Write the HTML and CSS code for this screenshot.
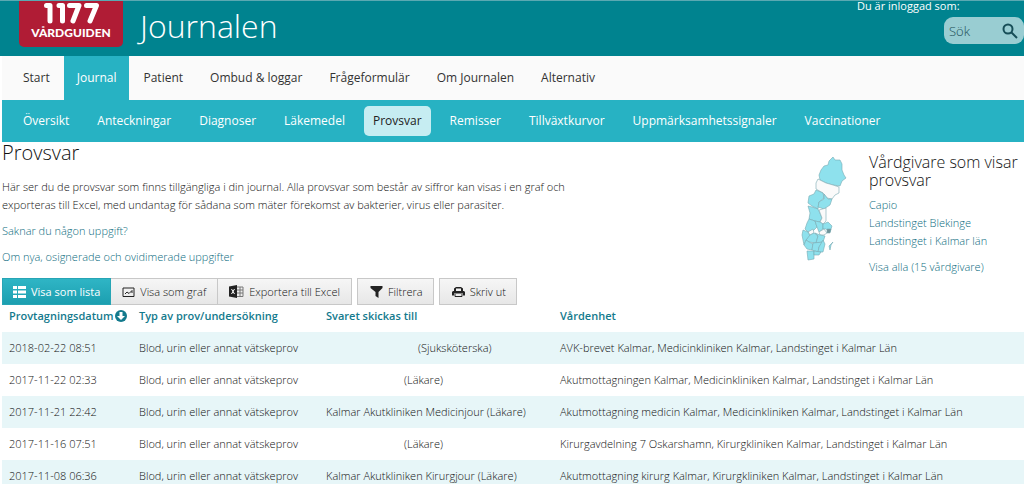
FILE: index.html
```html
<!DOCTYPE html>
<html lang="sv">
<head>
<meta charset="utf-8">
<title>Provsvar – Journalen</title>
<link rel="stylesheet" href="styles.css">
</head>
<body>
<header class="top">
  <a class="logo" href="#" aria-label="1177 Vårdguiden">
    <svg class="logo-mark" viewBox="0 0 58 22" aria-hidden="true">
      <path d="M3.500 3.500H7V19M16 3.500H19.500V19M26.500 3.500H36L30 19M43.500 3.500H53.500L47 19"/>
    </svg>
    <span class="logo-name">VÅRDGUIDEN</span>
  </a>
  <span class="brand">Journalen</span>
  <div class="account">
    <span class="login">Du är inloggad som:</span>
    <form class="search" role="search">
      <input class="search-field" type="text" placeholder="Sök" aria-label="Sök">
      <button class="search-button" type="button" aria-label="Sök">
        <svg viewBox="0 0 16 16"><circle cx="6" cy="6" r="4.500"/><path d="M9.500 9.500L15 15"/></svg>
      </button>
    </form>
  </div>
</header>
<nav class="main-nav" aria-label="Huvudmeny">
  <a href="#">Start</a>
  <a class="active" href="#">Journal</a>
  <a href="#">Patient</a>
  <a href="#">Ombud &amp; loggar</a>
  <a href="#">Frågeformulär</a>
  <a href="#">Om Journalen</a>
  <a href="#">Alternativ</a>
</nav>
<nav class="sub-nav" aria-label="Journal">
  <a href="#">Översikt</a>
  <a href="#">Anteckningar</a>
  <a href="#">Diagnoser</a>
  <a href="#">Läkemedel</a>
  <a class="current" href="#">Provsvar</a>
  <a href="#">Remisser</a>
  <a href="#">Tillväxtkurvor</a>
  <a href="#">Uppmärksamhetssignaler</a>
  <a href="#">Vaccinationer</a>
</nav>
<main class="page">
  <div class="intro">
    <section class="lead">
      <h1>Provsvar</h1>
      <p>Här ser du de provsvar som finns tillgängliga i din journal. Alla provsvar som består av siffror kan visas i en graf och exporteras till Excel, med undantag för sådana som mäter förekomst av bakterier, virus eller parasiter.</p>
      <p><a href="#">Saknar du någon uppgift?</a></p>
      <p><a href="#">Om nya, osignerade och ovidimerade uppgifter</a></p>
    </section>
    <aside class="providers">
      <svg class="map" viewBox="0 0 46 106" aria-hidden="true">
        <path class="land" d="M20 14L23 10L27 9L28 5L32 1L34 4L39 4L41 8L41 14L43 19L45 22L41 25L39 30L32 29L25 27L19 24L18 19Z"/>
        <path class="blank" d="M17 23L25 27L32 29L38 31L38 37L34 39L31 43L26 42L22 37L15 33L15 27Z"/>
        <path class="land" d="M15 34L22 37L23 42L18 46L17 53L11 50L7 47L8 40L13 38Z"/>
        <path class="land" d="M23 38L27 43L31 43L29 49L23 53L17 51L18 46L23 43Z"/>
        <path class="land" d="M7 50L11 51L17 53L21 62L19 66L14 65L8 63L9 57Z"/>
        <path class="blank" d="M18 54L25 52L25 65L22 68L19 66L21 62Z"/>
        <path class="land" d="M8 63L14 65L16 71L12 75L7 76L4 73L6 67Z"/>
        <path class="land" d="M14 65L19 66L22 68L22 73L18 76L16 71Z"/>
        <path class="land" d="M22 68L27 66L31 70L29 76L25 73L22 73Z"/>
        <path class="blank" d="M7 76L12 73L13 77L9 79ZM18 76L23 73L26 77L23 79L19 79Z"/>
        <path class="dark" d="M26 73L30 73L29 77L26 77Z"/>
        <path class="land" d="M2 74L7 76L9 80L5 84L3 89L1 79Z"/>
        <path class="land" d="M9 79L13 77L17 80L15 87L8 86L5 84Z"/>
        <path class="land" d="M14 77L19 79L24 80L22 86L15 87L17 80Z"/>
        <path class="land" d="M5 84L8 86L12 88L11 94L6 93L3 89Z"/>
        <path class="land" d="M12 87L22 86L18 91L17 96L11 94Z"/>
        <path class="land" d="M22 84L24 88L22 96L17 96L18 91Z"/>
        <path class="land" d="M6 95L13 95L13 103L7 104Z"/>
        <path class="land" d="M13 95L20 96L18 99L13 99Z"/>
        <path class="land" d="M32 86L30 89L29 94L28 90Z"/>
      </svg>
      <div class="provider-list">
        <h2>Vårdgivare som visar provsvar</h2>
        <ul>
          <li><a href="#">Capio</a></li>
          <li><a href="#">Landstinget Blekinge</a></li>
          <li><a href="#">Landstinget i Kalmar län</a></li>
        </ul>
        <a href="#">Visa alla (15 vårdgivare)</a>
      </div>
    </aside>
  </div>
  <div class="toolbar">
    <div class="group">
      <button class="tool selected" type="button"><svg viewBox="0 0 13 12"><path d="M0 0H4V3H0ZM5 0H13V3H5ZM0 4.500H4V7.500H0ZM5 4.500H13V7.500H5ZM0 9H4V12H0ZM5 9H13V12H5Z"/></svg>Visa som lista</button>
      <button class="tool" type="button"><svg viewBox="0 0 13 12"><path class="stroke" d="M1 2H12V10.500H1ZM3 8L5 6L7 7.500L10 4.500V7"/></svg>Visa som graf</button>
      <button class="tool" type="button"><svg class="wide" viewBox="0 0 15 13"><path d="M0 1.500L8 0V13L0 11.500Z"/><path class="thin" d="M8 2H14V11.500H8M8 5H14M8 8H14M11 2V11"/><path class="cross" d="M2.500 4L5.500 9M5.500 4L2.500 9"/></svg>Exportera till Excel</button>
    </div>
    <button class="tool filter" type="button"><svg viewBox="0 0 12 12"><path d="M0 0H12V2L8 6V12L5 10V6L0 2Z"/></svg>Filtrera</button>
    <button class="tool filter" type="button"><svg viewBox="0 0 13 12"><path fill-rule="evenodd" d="M4 1H9L11 2.500V5H12L13 6V9.500H11V7.500H2V9.500H0V6L1 5H2V2.500ZM4 2.500V5H9V2.500Z"/><path class="stroke" d="M3 8V10.500H10V8"/></svg>Skriv ut</button>
  </div>
  <table class="results">
    <thead>
      <tr><th class="col-date">Provtagningsdatum<svg class="sort" viewBox="0 0 12 12" aria-hidden="true"><circle cx="6" cy="6" r="6"/><path d="M4.500 2H7.500V6H10L6 10L2 6H4.500Z"/></svg></th><th class="col-type">Typ av prov/undersökning</th><th class="col-to">Svaret skickas till</th><th>Vårdenhet</th></tr>
    </thead>
    <tbody>
      <tr><td>2018-02-22 08:51</td><td>Blod, urin eller annat vätskeprov</td><td class="nurse">(Sjuksköterska)</td><td>AVK-brevet Kalmar, Medicinkliniken Kalmar, Landstinget i Kalmar Län</td></tr>
      <tr><td>2017-11-22 02:33</td><td>Blod, urin eller annat vätskeprov</td><td class="doctor">(Läkare)</td><td>Akutmottagningen Kalmar, Medicinkliniken Kalmar, Landstinget i Kalmar Län</td></tr>
      <tr><td>2017-11-21 22:42</td><td>Blod, urin eller annat vätskeprov</td><td>Kalmar Akutkliniken Medicinjour (Läkare)</td><td>Akutmottagning medicin Kalmar, Medicinkliniken Kalmar, Landstinget i Kalmar Län</td></tr>
      <tr><td>2017-11-16 07:51</td><td>Blod, urin eller annat vätskeprov</td><td class="doctor">(Läkare)</td><td>Kirurgavdelning 7 Oskarshamn, Kirurgkliniken Kalmar, Landstinget i Kalmar Län</td></tr>
      <tr><td>2017-11-08 06:36</td><td>Blod, urin eller annat vätskeprov</td><td>Kalmar Akutkliniken Kirurgjour (Läkare)</td><td>Akutmottagning kirurg Kalmar, Kirurgkliniken Kalmar, Landstinget i Kalmar Län</td></tr>
    </tbody>
  </table>
</main>
</body>
</html>
```
FILE: styles.css
```css
* { box-sizing: border-box; }
body { margin: 0; font: 300 11px/18px "Open Sans", "Noto Sans", sans-serif; color: #111; background: #fff; }
a { color: #0b6c80; text-decoration: none; }
button, input { font: inherit; }
.top { display: flex; height: 56px; padding-left: 19px; background: #00838f; border-top: 1px solid #5aa9b2; color: #fff; }
.logo { display: flex; flex-direction: column; align-items: center; width: 104px; height: 46px; background: #b01c35; border-radius: 0 0 5px 5px; color: #fff; }
.logo-mark { width: 58px; height: 22px; margin: 1px 0 0 2px; }
.logo-mark path { fill: none; stroke: #fff; stroke-width: 5; stroke-linecap: round; stroke-linejoin: round; }
.logo-name { margin-top: 1px; font: 900 12px/16px Lato, sans-serif; }
.brand { margin-left: 17px; font-size: 32px; line-height: 50px; }
.account { display: flex; flex-direction: column; margin-left: auto; width: 167px; }
.login { line-height: 12px; font-weight: 400; margin-top: -1px; }
.search { display: flex; align-items: center; width: 80px; height: 27px; margin: 5px 0 0 auto; padding: 0 6px 0 5px; border-radius: 9px; background: #99cdd2; }
.search-field { flex: 1; min-width: 0; padding: 0; border: 0; background: none; font-size: 13px; color: #1d4f57; }
.search-field::placeholder { color: #1d4f57; opacity: 1; }
.search-button { display: flex; padding: 0; border: 0; background: none; }
.search-button svg { width: 16px; height: 16px; fill: none; stroke: #174e58; stroke-width: 2; }
.main-nav, .sub-nav { display: flex; margin-left: 2px; font-size: 12px; font-weight: 400; }
.main-nav { gap: 1px; padding-left: 8px; background: #fafafa; line-height: 44px; }
.main-nav a { padding: 0 13px; color: #333; }
.main-nav .active { background: #27b2c3; color: #fff; }
.sub-nav { gap: 10px; align-items: center; height: 42px; padding-left: 12px; background: #27b2c3; }
.sub-nav a { padding: 0 9px; color: #fff; line-height: 30px; }
.sub-nav .current { background: #c6edf2; border-radius: 5px; color: #222; }
.page { padding-left: 2px; }
.intro { display: flex; justify-content: space-between; height: 136px; }
.lead { width: 570px; }
h1, h2 { margin: 0; font-weight: 300; color: #111; }
h1 { font-size: 20px; line-height: 22px; margin-bottom: 14px; }
p { margin: 0 0 8px; }
.providers { display: flex; width: 223px; gap: 22px; padding-top: 11px; }
.map { flex: none; width: 46px; height: 106px; margin-top: 3px; }
.map path { stroke: #79aab2; stroke-width: 0.6; stroke-linejoin: round; }
.land { fill: #8ee1ed; }
.blank { fill: #fafafa; }
.dark { fill: #6f9298; }
h2 { font-size: 16px; line-height: 18px; margin-bottom: 7px; }
ul { list-style: none; margin: 0 0 8px; padding: 0; }
.toolbar { display: flex; gap: 5px; }
.group { display: flex; }
.tool { display: flex; align-items: center; gap: 5px; height: 27px; padding: 0 11px; border: 1px solid #c8c8c8; background: linear-gradient(#f6f6f6, #e7e7e7); color: #111; }
.group .tool + .tool { border-left: 0; }
.tool.filter { padding: 0 10px 0 12px; }
.tool svg { width: 13px; height: 12px; fill: #222; }
.tool svg.wide { width: 15px; height: 13px; }
.tool .stroke { fill: none; stroke: #222; stroke-width: 1; }
.tool .thin { fill: none; stroke: #777; stroke-width: 1; }
.tool .cross { stroke: #fff; }
.tool.selected { background: linear-gradient(#2fb5c5, #1c9fb0); border-color: #27a5b5; color: #fff; font-weight: 400; padding: 0 10px; }
.tool.selected svg { fill: #fff; }
.results { width: 100%; border-collapse: collapse; table-layout: fixed; }
th { padding: 0 7px; height: 27px; text-align: left; vertical-align: top; font-weight: 600; line-height: 22px; color: #137a8d; white-space: nowrap; }
td { padding: 0 7px; height: 32px; white-space: nowrap; }
.col-date { width: 130px; }
.col-type { width: 187px; }
.col-to { width: 234px; }
tbody tr:nth-child(odd) { background: #e7f6f8; }
.nurse { padding-left: 99px; }
.doctor { padding-left: 85px; }
.sort { width: 12px; height: 12px; margin-left: 2px; vertical-align: -2px; fill: #137a8d; }
.sort path { fill: #fff; }
```
